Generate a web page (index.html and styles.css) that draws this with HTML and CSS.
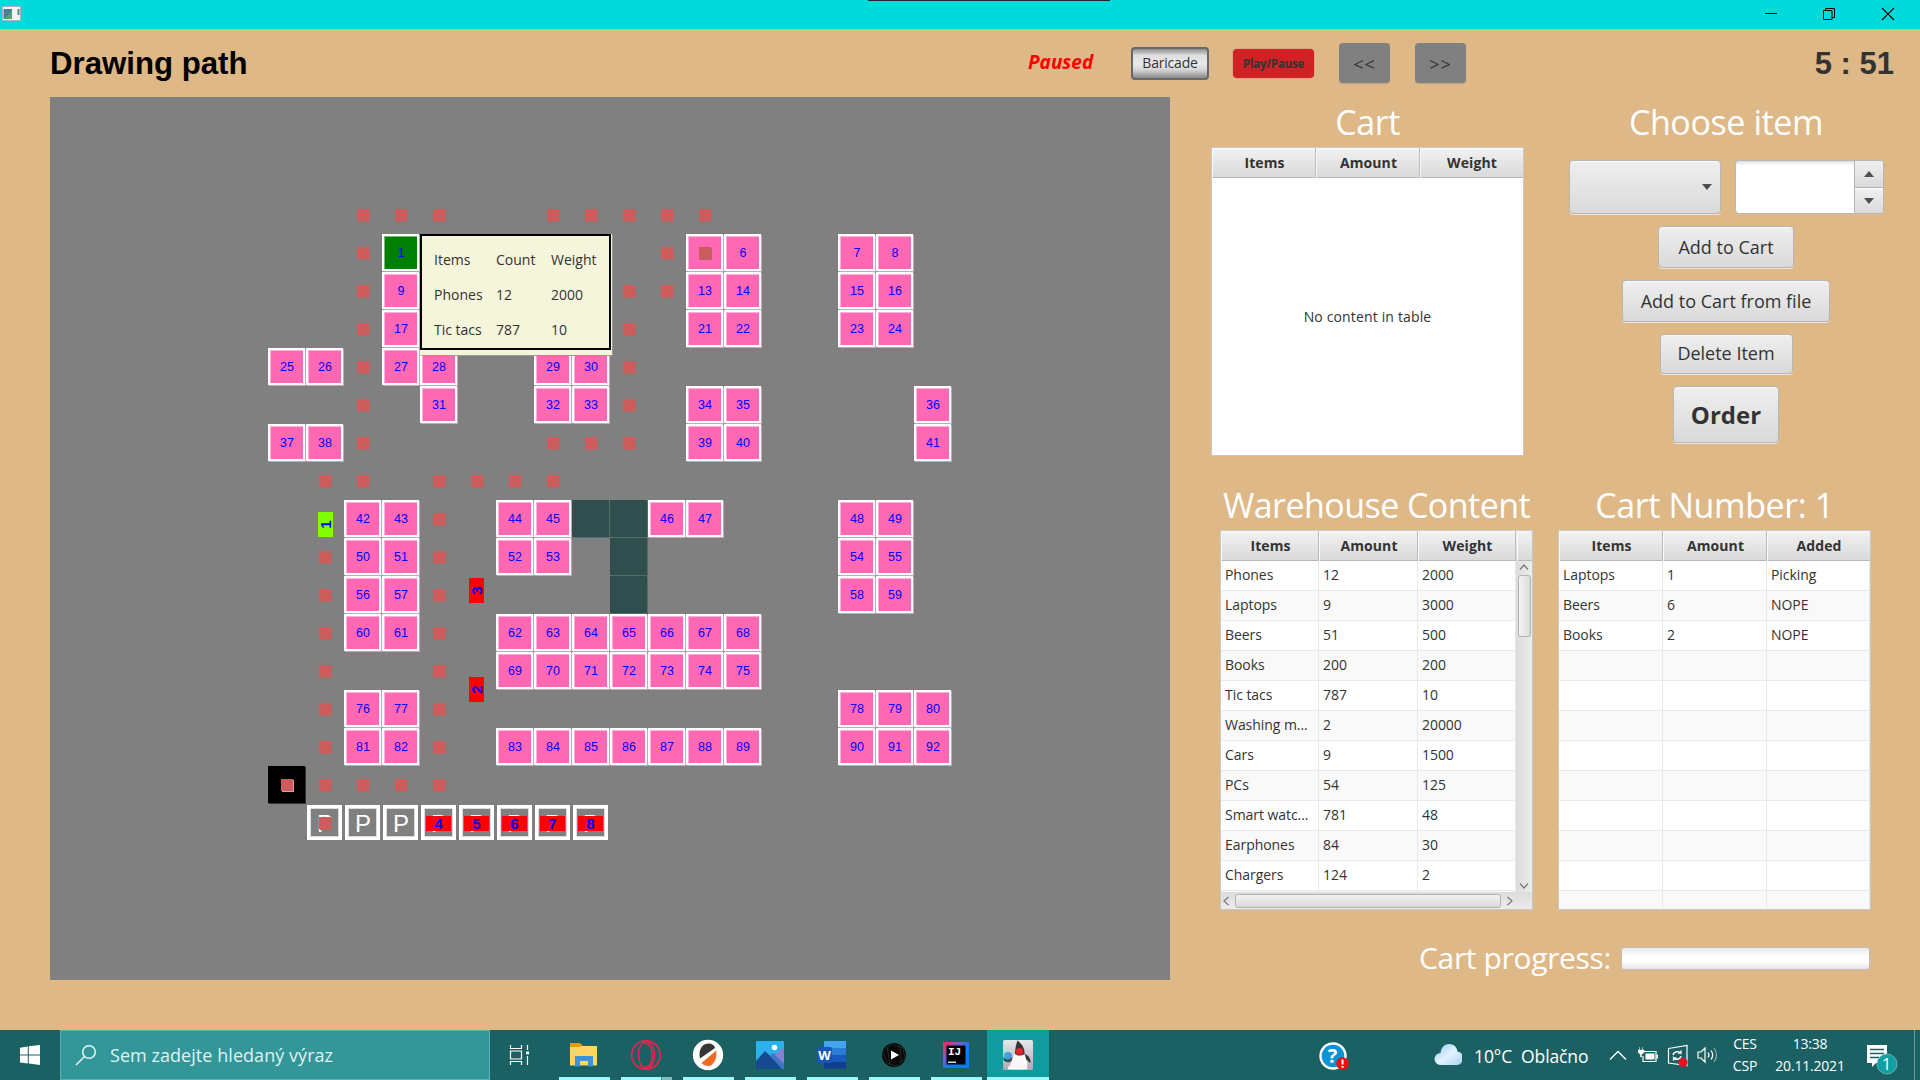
FILE: index.html
```html
<!DOCTYPE html>
<html lang="en">
<head>
<meta charset="utf-8">
<title>Warehouse</title>
<link rel="stylesheet" href="styles.css">
</head>
<body>
<header class="titlebar">
  <svg class="app-icon" width="20" height="16" viewBox="0 0 20 16"><rect x=".5" y=".5" width="18" height="14" fill="#f3f3f3" stroke="#a9b5b5"/><rect x="1.500" y="3" width="8.500" height="10" fill="#467f96"/><path d="M2 13l8-8v8z" fill="#5c9f70"/><rect x="15.500" y="3" width="2" height="6" fill="#4b8f96"/></svg>
  <span class="screen-tab"></span>
  <div class="window-buttons">
    <svg width="14" height="14" viewBox="0 0 14 14"><path d="M2 6.500h12" stroke="#000"/></svg>
    <svg width="14" height="14" viewBox="0 0 14 14"><path d="M1.500 3.500h8.500v9H1.500zM3.500 3.500v-2h9v9H10" fill="none" stroke="#000"/></svg>
    <svg width="14" height="14" viewBox="0 0 14 14"><path d="M1 1l12 12M13 1L1 13" stroke="#000" stroke-width="1.100"/></svg>
  </div>
</header>

<main class="app">
  <div class="toolbar">
    <h1 class="status">Drawing path</h1>
    <span class="paused">Paused</span>
    <button class="btn-baricade">Baricade</button>
    <button class="btn-play">Play/Pause</button>
    <button class="btn-speed">&lt;&lt;</button>
    <button class="btn-speed">&gt;&gt;</button>
    <span class="clock">5 : 51</span>
  </div>

  <div class="content">
    <section class="board">
      <div class="map" id="map"></div>
      <div class="tooltip"><div class="tooltip-box">
        <span>Items</span><span>Count</span><span>Weight</span>
        <span>Phones</span><span>12</span><span>2000</span>
        <span>Tic tacs</span><span>787</span><span>10</span>
      </div></div>
    </section>

    <section class="side">
      <div class="side-top">
        <div class="cart-panel">
          <h2>Cart</h2>
          <div class="frame frame-cart">
            <div class="head cols-even"><span>Items</span><span>Amount</span><span>Weight</span></div>
            <div class="empty">No content in table</div>
          </div>
        </div>
        <div class="choose-panel">
          <h2 class="t-choose">Choose item</h2>
          <div class="inputs">
            <div class="combo"><svg width="10" height="6" viewBox="0 0 10 6"><path d="M0 0h10L5 6z" fill="#4f4f4f"/></svg></div>
            <div class="spinner">
              <div class="field"></div>
              <div class="arrows">
                <span><svg width="10" height="6" viewBox="0 0 10 6"><path d="M0 6h10L5 0z" fill="#4f4f4f"/></svg></span>
                <span><svg width="10" height="6" viewBox="0 0 10 6"><path d="M0 0h10L5 6z" fill="#4f4f4f"/></svg></span>
              </div>
            </div>
          </div>
          <button class="fx b-add">Add to Cart</button>
          <button class="fx b-file">Add to Cart from file</button>
          <button class="fx b-del">Delete Item</button>
          <button class="fx b-order">Order</button>
        </div>
      </div>

      <div class="side-bottom">
        <div class="ware-panel">
          <h2 class="t-ware">Warehouse Content</h2>
          <div class="frame frame-ware">
            <div class="head cols-ware"><span>Items</span><span>Amount</span><span>Weight</span><span></span></div>
            <div class="scroll-area">
              <div class="rows rows-ware">
                <div class="row"><span>Phones</span><span>12</span><span>2000</span></div>
                <div class="row"><span>Laptops</span><span>9</span><span>3000</span></div>
                <div class="row"><span>Beers</span><span>51</span><span>500</span></div>
                <div class="row"><span>Books</span><span>200</span><span>200</span></div>
                <div class="row"><span>Tic tacs</span><span>787</span><span>10</span></div>
                <div class="row"><span>Washing m...</span><span>2</span><span>20000</span></div>
                <div class="row"><span>Cars</span><span>9</span><span>1500</span></div>
                <div class="row"><span>PCs</span><span>54</span><span>125</span></div>
                <div class="row"><span>Smart watc...</span><span>781</span><span>48</span></div>
                <div class="row"><span>Earphones</span><span>84</span><span>30</span></div>
                <div class="row"><span>Chargers</span><span>124</span><span>2</span></div>
                <div class="row"><span></span><span></span><span></span></div>
              </div>
              <div class="vbar">
                <svg width="10" height="6" viewBox="0 0 10 6"><path d="M1 5.500L5 1l4 4.500" fill="none" stroke="#777" stroke-width="1.200"/></svg>
                <i></i>
                <svg width="10" height="6" viewBox="0 0 10 6"><path d="M1 .5L5 5l4-4.500" fill="none" stroke="#777" stroke-width="1.200"/></svg>
              </div>
            </div>
            <div class="hbar">
              <svg width="6" height="10" viewBox="0 0 6 10"><path d="M5.500 1L1 5l4.500 4" fill="none" stroke="#777" stroke-width="1.200"/></svg>
              <i></i>
              <svg width="6" height="10" viewBox="0 0 6 10"><path d="M.5 1L5 5 .5 9" fill="none" stroke="#777" stroke-width="1.200"/></svg>
            </div>
          </div>
        </div>
        <div class="number-panel">
          <h2 class="t-number">Cart Number: 1</h2>
          <div class="frame frame-number">
            <div class="head cols-even"><span>Items</span><span>Amount</span><span>Added</span></div>
            <div class="rows rows-number">
              <div class="row"><span>Laptops</span><span>1</span><span>Picking</span></div>
              <div class="row"><span>Beers</span><span>6</span><span>NOPE</span></div>
              <div class="row"><span>Books</span><span>2</span><span>NOPE</span></div>
              <div class="row"><span></span><span></span><span></span></div>
              <div class="row"><span></span><span></span><span></span></div>
              <div class="row"><span></span><span></span><span></span></div>
              <div class="row"><span></span><span></span><span></span></div>
              <div class="row"><span></span><span></span><span></span></div>
              <div class="row"><span></span><span></span><span></span></div>
              <div class="row"><span></span><span></span><span></span></div>
              <div class="row"><span></span><span></span><span></span></div>
              <div class="row"><span></span><span></span><span></span></div>
            </div>
          </div>
        </div>
      </div>

      <div class="progress-line"><span class="progress-label">Cart progress:</span><div class="progress"></div></div>
    </section>
  </div>
</main>

<footer class="taskbar">
  <div class="start"><svg width="20" height="20" viewBox="0 0 20 20" fill="#fff"><path d="M0 2.700L7.800 1.500v8H0zM8.800 1.300L20 0v9.500H8.800zM0 10.500h7.800v8L0 17.400zM8.800 10.500H20V20L8.800 18.600z"/></svg></div>
  <div class="search">
    <svg width="22" height="22" viewBox="0 0 22 22" fill="none" stroke="#e4f5f5" stroke-width="1.500"><circle cx="14" cy="8" r="6.300"/><path d="M9.500 12.500L1 21"/></svg>
    <span>Sem zadejte hledaný výraz</span>
  </div>
  <div class="taskview"><svg width="22" height="20" viewBox="0 0 22 20" fill="none" stroke="#fff" stroke-width="1.200"><path d="M1.500 0v3.500h11V0M1.500 20v-3.500h11V20M1.500 6h11v8h-11zM18.500 0v5M18.500 11v9"/><path d="M17 6.500h3v2.800h-3z" fill="#fff" stroke="none"/></svg></div>
  <div class="apps">
    <div class="task"><svg width="32" height="32" viewBox="0 0 32 32"><path d="M2 4h10l3 3h14v4H2z" fill="#e29d08"/><path d="M2 8h10l2-1h15v19.500H2z" fill="#ffd563"/><path d="M7 27.500V17h18v10.500h-5V22h-8v5.500z" fill="#3c93d8"/></svg><i></i></div>
    <div class="task split"><svg width="32" height="32" viewBox="0 0 32 32" fill="none" stroke="#f02050" stroke-width="1.500"><circle cx="16" cy="16" r="14.300"/><ellipse cx="16.500" cy="16" rx="8" ry="13.500"/><path d="M14 4c11-1 11 25 1 24"/></svg><i></i></div>
    <div class="task"><svg width="32" height="32" viewBox="0 0 32 32"><circle cx="16" cy="16" r="15.200" fill="#fff"/><path d="M8 19.500C6 11 10 5 16 4.500c4 0 6.500 2 7 4.500z" fill="#363636"/><path d="M24.300 11.500c1 8-2.500 14.500-7.300 15.500-4 0-6.500-2-7.500-3z" fill="#ee6c22"/></svg><i></i></div>
    <div class="task"><svg width="32" height="32" viewBox="0 0 32 32"><rect x="2" y="2" width="28" height="28" rx="1" fill="#2bb1ec"/><path d="M30 8v22H15V20z" fill="#8580cf"/><path d="M2 22l9-10 19 18H2z" fill="#154a91"/><path d="M16 17l3-3 11 11v5h-2z" fill="#3f76c6"/><circle cx="20.500" cy="8.500" r="2.700" fill="#fff"/></svg><i></i></div>
    <div class="task"><svg width="32" height="32" viewBox="0 0 32 32"><path d="M8 2h22v7H8z" fill="#41a5ee"/><path d="M8 9h22v7H8z" fill="#2b7cd3"/><path d="M8 16h22v7H8z" fill="#185abd"/><path d="M8 23h22v6.500H8z" fill="#103f91"/><rect x="1" y="8" width="15" height="16" rx="1.500" fill="#1856b5"/><text x="8.500" y="20.500" text-anchor="middle" class="glyph-word">W</text></svg><i></i></div>
    <div class="task"><svg width="32" height="32" viewBox="0 0 32 32"><circle cx="16" cy="16" r="12" fill="#080808"/><path d="M5 13l8-8 12 4 2 11-9 7-9-3zM9 8l3 17M22 7l1 17" fill="none" stroke="#333" stroke-width=".7"/><path d="M13 11.500l8 4.500-8 4.500z" fill="#fff"/></svg><i></i></div>
    <div class="task"><svg width="32" height="32" viewBox="0 0 32 32"><defs><linearGradient id="ij" x1="0" y1="0" x2="1" y2="1"><stop offset="0" stop-color="#fe2857"/><stop offset=".35" stop-color="#7a5bd0"/><stop offset=".6" stop-color="#087cfa"/></linearGradient></defs><rect x="3" y="3" width="26" height="26" fill="url(#ij)"/><rect x="6.500" y="6.500" width="19" height="19" fill="#000"/><text x="8" y="16" class="glyph-ij">IJ</text><path d="M8 22.500h8v1.500H8z" fill="#ddd"/></svg><i></i></div>
    <div class="task active"><svg width="32" height="32" viewBox="0 0 32 32"><defs><linearGradient id="dk" x1="0" y1="0" x2="0" y2="1"><stop offset="0" stop-color="#e6e7ea"/><stop offset="1" stop-color="#a9abb5"/></linearGradient></defs><rect x="1" y="1" width="30" height="30" rx="1.500" fill="url(#dk)"/><circle cx="6" cy="17" r="4" fill="#4d9bd8"/><path d="M1.500 18c3 4 7 3 10-1l1 3c-3 4-9 4-11 1z" fill="#3b4654"/><path d="M9 30.500c-4 0-4-2.500-1-4 2-4 2-9 5-12h9c3 3 4 10 3 16z" fill="#f8f8f8"/><path d="M15.500 1.500c4 3 7.500 8 7 13.500-3 2-7 2-9.500 0 0-5 1-9 2.500-13.500z" fill="#34343a"/><path d="M22.500 15c4 1 6.500 5 6 9l-4-3z" fill="#35353c"/><circle cx="17.500" cy="12.500" r="3.600" fill="#e62025"/></svg><i></i></div>
  </div>
  <div class="tray">
    <svg class="i-help" width="32" height="32" viewBox="0 0 32 32"><circle cx="15" cy="15" r="13.700" fill="#fff"/><circle cx="15" cy="15" r="11.300" fill="#0b93d6"/><text x="14.500" y="22" text-anchor="middle" class="glyph-help">?</text><circle cx="24.500" cy="22.500" r="6.300" fill="#f20d0d"/><path d="M24.500 18.500v5M24.500 25v1.800" stroke="#fff" stroke-width="2"/></svg>
    <svg class="i-cloud" width="28" height="22" viewBox="0 0 28 22"><defs><linearGradient id="cl" x1="0" y1="0" x2="1" y2="1"><stop offset="0" stop-color="#8ec9f5"/><stop offset=".5" stop-color="#e3f2ff"/><stop offset="1" stop-color="#a9d2f3"/></linearGradient></defs><path d="M6.500 21a6 6 0 010-12C7 3 11 0 15 0c5 0 8 3 8.500 7.500A6.800 6.800 0 0122 21z" fill="url(#cl)"/></svg>
    <span class="weather">10°C&nbsp; Oblačno</span>
    <svg class="i-chev" width="18" height="12" viewBox="0 0 18 12"><path d="M1 10.500l8-8 8 8" fill="none" stroke="#fff" stroke-width="1.300"/></svg>
    <svg class="i-bat" width="20" height="16" viewBox="0 0 20 16"><path d="M6 4.500h12v10H5V9" fill="none" stroke="#fff" stroke-width="1.200"/><path d="M7.500 6.500h9v6h-9zM18.500 7.500H20v4h-1.500z" fill="#fff"/><path d="M1.500 0v3M4.500 0v3M0 3h6v2.500L4 7H2L0 5.500zM2.500 7h1v3h-1z" fill="#fff" stroke="#fff" stroke-width=".5"/></svg>
    <svg class="i-sync" width="22" height="24" viewBox="0 0 22 24"><path d="M1.500 4.500L20 1.500v20L1.500 19z" fill="none" stroke="#fff" stroke-width="1.200"/><path d="M6 11c1-4 6-4 8-2V6.500M14 9h-3M14 12c-1 4-6 4-7.500 2v2.500M6.500 14h3" fill="none" stroke="#fff" stroke-width="1.300"/><circle cx="16" cy="18.500" r="4.600" fill="#e81123"/></svg>
    <svg class="i-vol" width="22" height="18" viewBox="0 0 22 18" fill="none" stroke="#fff" stroke-width="1.200"><path d="M1 6h3l4-4v14l-4-4H1zM11 6.500q1.800 2.500 0 5M14 4.500q3.300 4.500 0 9"/><path d="M17 2q5 7 0 14" opacity=".5"/></svg>
    <div class="stack s-lang"><span>CES</span><span>CSP</span></div>
    <div class="stack s-time"><span>13:38</span><span>20.11.2021</span></div>
    <svg class="i-note" width="34" height="32" viewBox="0 0 34 32"><path d="M1 1h20v18H10l-4 4v-4H1z" fill="#fff"/><path d="M4 5.500h14M4 9.500h14M4 13.500h9" stroke="#1b6060" stroke-width="1.300"/><circle cx="21" cy="20" r="10" fill="#10a0a2" stroke="#77bcbd" stroke-width=".8"/><text x="20.500" y="26" text-anchor="middle" class="glyph-note">1</text></svg>
    <span class="desk"></span>
  </div>
</footer>
<script src="map.js"></script>
</body>
</html>
```
FILE: styles.css
```css
* { box-sizing: border-box; }
body { margin: 0; width: 1920px; height: 1080px; overflow: hidden; background: #deb887; color: #333; font-family: "Open Sans", "Noto Sans", sans-serif; display: flex; flex-direction: column; }
h1, h2 { margin: 0; font-weight: 400; }
svg { display: block; flex: none; }
button { font-family: inherit; color: #333; padding: 0; border: 0; flex: none; white-space: nowrap; }

.titlebar { height: 29px; flex: none; background: #00dada; display: flex; padding: 0 25px 0 2px; }
.app-icon { margin-top: 6px; }
.screen-tab { width: 242px; height: 1px; background: #202828; margin-left: 846px; }
.window-buttons { display: flex; gap: 45px; margin: 7px 0 0 auto; }

.app { height: 1001px; flex: none; padding: 0 25px 0 50px; }
.toolbar { height: 68px; display: flex; align-items: center; padding-bottom: 0; }
.status { width: 978px; font: bold 31.200px/40px "Liberation Sans", sans-serif; color: #000; padding-top: 1px; }
.paused { width: 103px; color: #f00; font-weight: 700; font-style: italic; font-size: 19px; letter-spacing: 0; padding-bottom: 2px; }
.btn-baricade { width: 78px; height: 33px; margin-right: 24px; border: 2px solid #66686b; border-radius: 4px; font-size: 14px; padding-bottom: 1px; letter-spacing: -.2px; background: linear-gradient(#8e8e8e, #dedede 22%, #eaeaea 50%, #d5d5d5 72%, #898989); }
.btn-play { width: 81px; height: 29px; margin-right: 25px; border-radius: 4px; background: #d02124; font-weight: 700; font-size: 11.500px; letter-spacing: -.2px; box-shadow: 0 0 0 1px #d8907066; }
.btn-speed { width: 51px; height: 40px; margin-right: 25px; border-radius: 4px; background: #808080; font-size: 18px; letter-spacing: 1px; padding-top: 2px; box-shadow: 0 1px 1px #c0a27c; }
.clock { margin-left: auto; font: bold 31px/40px "Liberation Sans", sans-serif; padding: 1px 1px 0 0; }

.content { display: flex; }
.board { position: relative; width: 1120px; height: 883px; flex: none; background: #808080; padding: 99px 0 0 218px; }
.map { position: relative; display: grid; grid-template-columns: repeat(18, 38px); grid-auto-rows: 38px; font: 12.500px/13px "Liberation Sans", sans-serif; color: #00f; }
.cell { position: relative; width: 38px; height: 38px; }
.shelf { width: 37px; height: 37px; border: 2px solid #fff; background: #ff69b4; box-shadow: inset 1px 1px #ffb0d6, 1px 1px #cfa3b9; display: flex; align-items: center; justify-content: center; padding: 1px 0 0 1px; }
.shelf.picked { background: #008000; box-shadow: inset 1px 1px #79ba79, 1px 1px #9fae9f; }
.wall { width: 37px; height: 37px; background: #2f4f4f; box-shadow: 1px 1px #566a6a; }
.depot { width: 37px; height: 37px; background: #000; box-shadow: 1px 1px #333; }
.dot::after { content: ""; position: absolute; left: 13px; top: 13px; width: 12px; height: 12px; background: #cd5c5c; box-shadow: 1px 1px #a86a6a; }
.shelf.dot::after { left: 11px; top: 11px; }
.depot.dot::after { box-shadow: 1px 1px #e0a0a0; }
.park { width: 35px; height: 35px; margin: 1px; border: 3px solid #fff; box-shadow: inset 0 0 0 1px #dcdcdc; color: #fff; font-size: 24px; line-height: 31px; padding-left: 7px; }
.park.dot::after { left: 9px; top: 9px; }
.cart { position: absolute; width: 25px; height: 15px; background: #f00; font: bold 15px/15px "Liberation Sans", sans-serif; text-align: center; }
.cart.turned { width: 15px; height: 25px; display: flex; align-items: center; justify-content: center; }
.cart.turned b { transform: rotate(-90deg); }
.cart.current { background: #7fff00; }
.tooltip { position: absolute; left: 370px; top: 137px; width: 192px; height: 121px; background: #f5f5dc; box-shadow: 1px 1px #9a9a90; }
.tooltip-box { width: 191px; height: 116px; border: 2px solid #000; background: #f5f5dc; display: grid; grid-template-columns: 62px 55px auto; grid-auto-rows: 35px; line-height: 35px; padding: 6px 0 0 12px; font-size: 14px; }

.side { padding-left: 41px; }
h2 { color: #fff; font-size: 34px; line-height: 51px; height: 50px; text-align: center; white-space: nowrap; letter-spacing: -.4px; }
.side-top { display: flex; height: 383px; }
.cart-panel { width: 313px; margin-right: 44px; }
.frame-cart { height: 309px !important; }
.choose-panel { width: 316px; display: flex; flex-direction: column; align-items: center; }
.frame { border: 1px solid #c8c8c8; background: #fff; overflow: hidden; font-size: 14px; letter-spacing: -.05px; }
.head { display: grid; height: 30px; font-weight: 700; line-height: 30px; font-size: 14px; letter-spacing: .1px; text-align: center; background: linear-gradient(#f2f2f2, #d9d9d9); border-bottom: 1px solid #b8b8b8; padding-right: 1px; }
.head span { border-right: 1px solid #bdbdbd; box-shadow: inset 1px 1px #f8f8f8; padding-left: 2px; }
.head span:last-child { border-right: 0; }
.cols-even { grid-template-columns: 104px 104px auto; }
.cols-ware { grid-template-columns: 98px 99px 98px auto; }
.cols-ware span:last-child { margin-left: 1px; }
.empty { height: 276px; display: flex; align-items: center; justify-content: center; letter-spacing: .15px; }
.inputs { display: flex; gap: 14px; margin: 13px 0 12px; }
.combo { width: 152px; height: 54px; border: 1px solid #b6b6b6; border-radius: 4px; background: linear-gradient(#efefef, #dadada); box-shadow: inset 0 1px #f8f8f8, 0 1px #efe6da; display: flex; align-items: center; justify-content: flex-end; padding-right: 8px; }
.spinner { width: 149px; height: 54px; display: flex; border: 1px solid #b6b6b6; border-radius: 4px; background: #fff; overflow: hidden; }
.field { flex: 1; box-shadow: inset 0 4px 4px -3px #ccc; }
.arrows { width: 29px; border-left: 1px solid #b6b6b6; display: grid; grid-template-rows: 1fr 1fr; }
.arrows span { display: flex; align-items: center; justify-content: center; background: linear-gradient(#f0f0f0, #dadada); }
.arrows span:last-child { border-top: 1px solid #b0b0b0; box-shadow: inset 0 1px #fff; }
.fx { border: 1px solid #b6b6b6; border-radius: 4px; background: linear-gradient(#efefef, #d9d9d9); box-shadow: inset 0 1px #f8f8f8, 0 1px #efe6da; font-size: 18px; padding-bottom: 0; }
.b-add { width: 136px; height: 42px; margin-bottom: 12px; }
.b-file { width: 208px; height: 42px; margin-bottom: 12px; }
.b-del { width: 133px; height: 40px; margin-bottom: 12px; padding-bottom: 2px; }
.b-order { width: 106px; height: 57px; font-weight: 700; font-size: 24px; padding-bottom: 0; }

.side-bottom { display: flex; padding-left: 9px; height: 430px; }
.ware-panel { width: 313px; margin-right: 25px; }
.t-ware { letter-spacing: -.55px; }
.number-panel { width: 313px; }
.side-bottom .frame { height: 380px; }
.scroll-area { display: flex; height: 331px; }
.rows { overflow: hidden; }
.rows-ware { width: 295px; }
.rows-number { height: 348px; }
.row { display: grid; height: 30px; line-height: 28px; border-bottom: 1px solid #e9e9e9; background: #fff; }
.rows-ware .row { grid-template-columns: 98px 99px 98px; }
.rows-number .row { grid-template-columns: 104px 104px auto; }
.row:nth-child(even) { background: #f9f9f9; }
.row span { padding-left: 4px; border-right: 1px solid #e9e9e9; white-space: nowrap; }
.vbar { width: 16px; background: linear-gradient(90deg, #dcdcdc, #ececec); display: flex; flex-direction: column; align-items: center; padding: 3px 0; }
.vbar i { width: 13px; height: 62px; margin: 5px 0 auto; border: 1px solid #b2b2b2; border-radius: 3px; background: linear-gradient(90deg, #f4f4f4, #dadada); }
.hbar { height: 17px; background: linear-gradient(#dcdcdc, #ebebeb); display: flex; align-items: center; padding-left: 2px; gap: 6px; }
.hbar i { width: 266px; height: 14px; border: 1px solid #b2b2b2; border-radius: 3px; background: linear-gradient(#f2f2f2, #dadada); }

.progress-line { display: flex; align-items: center; justify-content: flex-end; height: 46px; margin-top: 26px; width: 659px; }
.progress-label { color: #fff; font-size: 30px; letter-spacing: -.35px; margin-right: 10px; padding-bottom: 4px; white-space: nowrap; }
.progress { width: 249px; height: 23px; border: 1px solid #bebebe; border-radius: 3px; background: linear-gradient(#e8e8e8, #fff 40%, #fff 65%, #e4e4e4); margin-top: -1px; }

.taskbar { height: 50px; flex: none; background: #1b6062; display: flex; color: #fff; }
.start { width: 60px; display: flex; align-items: center; justify-content: center; padding-left: 0; }
.search { width: 430px; border: 1px solid #5bb0b1; background: #339698; display: flex; align-items: center; padding-left: 14px; gap: 13px; font-size: 18px; color: #dff3f3; letter-spacing: .05px; }
.search span { padding-bottom: 1px; }
.taskview { width: 63px; padding: 15px 0 0 19px; }
.apps { display: flex; }
.task { width: 62px; height: 50px; display: flex; flex-direction: column; align-items: center; justify-content: space-between; padding-top: 9px; }
.task i { width: 51px; height: 3px; background: #9cfafb; }
.task.split i { background: linear-gradient(90deg, #9cfafb 40px, #4f8f90 40px, #4f8f90 41px, #7fbebf 41px); }
.task.active { background: #109c9e; }
.task.active i { width: 62px; }
.glyph-word { font: bold 13px "Open Sans", sans-serif; fill: #fff; }
.glyph-ij { font: bold 11px "Liberation Mono", monospace; fill: #fff; }
.glyph-help { font: bold 20px "Open Sans", sans-serif; fill: #fff; }
.glyph-note { font: 16px "Open Sans", sans-serif; fill: #fff; }
.tray { display: flex; flex: 1; align-items: flex-start; }
.i-help { margin: 11px 0 0 269px; }
.i-cloud { margin: 14px 0 0 84px; }
.weather { width: 125px; margin: 13px 0 0 12px; font-size: 17.500px; line-height: 27px; white-space: nowrap; letter-spacing: -.1px; }
.i-chev { margin: 19px 0 0 10px; }
.i-bat { margin: 17px 0 0 11px; }
.i-sync { margin: 14px 0 0 9px; }
.i-vol { margin: 16px 0 0 8px; }
.stack { display: flex; flex-direction: column; align-items: center; font-size: 14px; line-height: 22px; margin-top: 3px; letter-spacing: -.2px; }
.s-lang { width: 30px; margin-left: 11px; }
.s-time { width: 76px; margin-left: 12px; }
.i-note { margin: 14px 0 0 18px; }
.desk { width: 1px; height: 50px; background: #6f9c9d; margin-left: auto; margin-right: 5px; }
```
FILE: map.js
```js
// One line per row: numbers are shelves, "." empty, "o" path, "#" barricade,
// "P" parking, "D" depot; a trailing "o" marks the path over a tile.
const rows = [
  ". . o o o . . o o o o o . . . . . .",
  ". . o 1! . . . . . . o 5o 6 . . 7 8 .",
  ". . o 9 . . . . . o o 13 14 . . 15 16 .",
  ". . o 17 . . . . . o . 21 22 . . 23 24 .",
  "25 26 o 27 28 . . 29 30 o . . . . . . . .",
  ". . o . 31 . . 32 33 o . 34 35 . . . . 36",
  "37 38 o . . . . o o o . 39 40 . . . . 41",
  ". o o . o o o o . . . . . . . . . .",
  ". . 42 43 o . 44 45 # # 46 47 . . . 48 49 .",
  ". o 50 51 o . 52 53 . # . . . . . 54 55 .",
  ". o 56 57 o . . . . # . . . . . 58 59 .",
  ". o 60 61 o . 62 63 64 65 66 67 68 . . . . .",
  ". o . . o . 69 70 71 72 73 74 75 . . . . .",
  ". o 76 77 o . . . . . . . . . . 78 79 80",
  ". o 81 82 o . 83 84 85 86 87 88 89 . . 90 91 92",
  "Do o o o o . . . . . . . . . . . . .",
  ". Po P P P P P P P . . . . . . . . ."
];
const carts = [
  { id: 1, x: 50, y: 316, cls: "turned current" },
  { id: 3, x: 201, y: 382, cls: "turned" },
  { id: 2, x: 200.5, y: 481, cls: "turned" },
  { id: 4, x: 158, y: 620, cls: "" },
  { id: 5, x: 196, y: 620, cls: "" },
  { id: 6, x: 234, y: 620, cls: "" },
  { id: 7, x: 272, y: 620, cls: "" },
  { id: 8, x: 310, y: 620, cls: "" }
];
const map = document.getElementById("map");
for (const token of rows.join(" ").split(" ")) {
  const tile = document.createElement("div");
  tile.className = "cell";
  if (/^\d/.test(token)) {
    tile.classList.add("shelf");
    if (!token.endsWith("o")) tile.textContent = parseInt(token, 10);
  }
  if (token.endsWith("!")) tile.classList.add("picked");
  if (token.endsWith("o")) tile.classList.add("dot");
  if (token === "#") tile.classList.add("wall");
  if (token[0] === "D") tile.classList.add("depot");
  if (token[0] === "P") { tile.classList.add("park"); tile.textContent = "P"; }
  map.append(tile);
}
for (const c of carts) {
  const el = document.createElement("div");
  el.className = "cart " + c.cls;
  el.style.left = c.x + "px";
  el.style.top = c.y + "px";
  const b = document.createElement("b");
  b.textContent = c.id;
  el.append(b);
  map.append(el);
}
```
